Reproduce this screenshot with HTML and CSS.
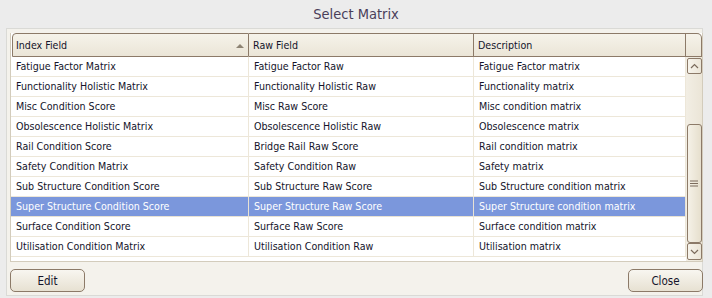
FILE: index.html
```html
<!DOCTYPE html>
<html>
<head>
<meta charset="utf-8">
<link rel="stylesheet" href="styles.css">
</head>
<body>
<div class="title">Select Matrix</div>
<div class="panel">
  <div class="table">
    <div class="hcell c1">Index Field<span class="sort"></span></div>
    <div class="hcell">Raw Field</div>
    <div class="hcell">Description</div>
    <div class="hcell corner"></div>

    <div class="scroll">
      <div class="sbtn up"><svg width="9" height="6" viewBox="0 0 9 6"><path d="M1 5 L4.5 1.5 L8 5" fill="none" stroke="#7b6b5c" stroke-width="1.2"/></svg></div>
      <div class="gap1"></div>
      <div class="thumb"><svg width="8" height="7" viewBox="0 0 8 7"><path d="M0 1h8M0 3.5h8M0 6h8" stroke="#7b6b5c" stroke-width="1"/></svg></div>
      <div class="gap2"></div>
      <div class="sbtn down"><svg width="9" height="6" viewBox="0 0 9 6"><path d="M1 1 L4.5 4.5 L8 1" fill="none" stroke="#7b6b5c" stroke-width="1.2"/></svg></div>
    </div>

    <div class="cell">Fatigue Factor Matrix</div><div class="cell">Fatigue Factor Raw</div><div class="cell">Fatigue Factor matrix</div>
    <div class="cell">Functionality Holistic Matrix</div><div class="cell">Functionality Holistic Raw</div><div class="cell">Functionality matrix</div>
    <div class="cell">Misc Condition Score</div><div class="cell">Misc Raw Score</div><div class="cell">Misc condition matrix</div>
    <div class="cell">Obsolescence Holistic Matrix</div><div class="cell">Obsolescence Holistic Raw</div><div class="cell">Obsolescence matrix</div>
    <div class="cell">Rail Condition Score</div><div class="cell">Bridge Rail Raw Score</div><div class="cell">Rail condition matrix</div>
    <div class="cell">Safety Condition Matrix</div><div class="cell">Safety Condition Raw</div><div class="cell">Safety matrix</div>
    <div class="cell">Sub Structure Condition Score</div><div class="cell">Sub Structure Raw Score</div><div class="cell">Sub Structure condition matrix</div>
    <div class="cell sel">Super Structure Condition Score</div><div class="cell sel">Super Structure Raw Score</div><div class="cell sel">Super Structure condition matrix</div>
    <div class="cell">Surface Condition Score</div><div class="cell">Surface Raw Score</div><div class="cell">Surface condition matrix</div>
    <div class="cell">Utilisation Condition Matrix</div><div class="cell">Utilisation Condition Raw</div><div class="cell">Utilisation matrix</div>
    <div class="filler"></div>
  </div>
  <div class="buttons">
    <button class="btn">Edit</button>
    <button class="btn">Close</button>
  </div>
</div>
</body>
</html>
```
FILE: styles.css
```css
html, body {
  margin: 0;
  padding: 0;
}
body {
  width: 712px;
  height: 298px;
  background: #ececec;
  font-family: "DejaVu Sans Condensed", "DejaVu Sans", sans-serif;
  font-size: 10.6px;
  color: #14142a;
  overflow: hidden;
}
.title {
  height: 28px;
  line-height: 28px;
  text-align: center;
  font-size: 14.5px;
  color: #4a3e5a;
}
.panel {
  margin-left: 6px;
  width: 697px;
  height: 268px;
  border: 1px solid #dadad6;
  background: #f4f2ec;
  padding: 4px 0 0 3px;
  box-sizing: border-box;
}
.table {
  width: 693px;
  box-sizing: border-box;
  border: 1px solid #d3ccbc;
  border-top: none;
  background: #fff;
  display: grid;
  grid-template-columns: 238px 225px 212px 16px;
  grid-template-rows: 24px repeat(10, 20px) 4px;
}
.hcell {
  background: linear-gradient(#f6f3ea, #ebe5d7);
  border-top: 1px solid #8c7a68;
  border-bottom: 1px solid #8c7a68;
  border-right: 1px solid #8c7a68;
  padding-left: 4px;
  display: flex;
  align-items: center;
  position: relative;
}
.hcell.c1 {
  border-left: 1px solid #8c7a68;
  border-top-left-radius: 4px;
  margin-left: 1px;
  padding-left: 3px;
}
.hcell.corner {
  border-top-right-radius: 5px;
  padding: 0;
}
.sort {
  position: absolute;
  right: 4px;
  top: 10px;
  width: 0;
  height: 0;
  border-left: 4px solid transparent;
  border-right: 4px solid transparent;
  border-bottom: 4px solid #8e8474;
}
.cell {
  border-bottom: 1px solid #ede7d9;
  border-right: 1px solid #ede7d9;
  padding-left: 5px;
  padding-bottom: 1px;
  display: flex;
  align-items: center;
  white-space: nowrap;
  overflow: hidden;
}
.cell.sel {
  background: #7b97dc;
  color: #fff;
  border-bottom-color: #e8e2d4;
  border-right-color: #e8e2d4;
}
.filler {
  grid-column: 1 / 4;
}
.scroll {
  grid-column: 4;
  grid-row: 2 / 13;
  background: linear-gradient(90deg, #f2eee4, #ebe5d7);
  display: flex;
  flex-direction: column;
  align-items: center;
}
.sbtn {
  width: 15px;
  height: 16px;
  box-sizing: border-box;
  border: 1px solid #8c7a68;
  border-radius: 2px;
  background: linear-gradient(90deg, #f7f4ec, #ebe5d7);
  display: flex;
  align-items: center;
  justify-content: center;
}
.sbtn.up {
  margin-top: 1px;
}
.sbtn.down {
  height: 17px;
  margin-bottom: 1px;
}
.gap1 {
  height: 50px;
}
.gap2 {
  flex: 1;
}
.thumb {
  width: 15px;
  height: 119px;
  box-sizing: border-box;
  border: 1px solid #8c7a68;
  border-radius: 3px;
  background: linear-gradient(90deg, #f5f1e7, #e6dfcd);
  display: flex;
  align-items: center;
  justify-content: center;
}
.buttons {
  display: flex;
  justify-content: space-between;
  margin-top: 7px;
  width: 693px;
}
.btn {
  width: 75px;
  height: 23px;
  border: 1px solid #8c7a68;
  border-radius: 5px;
  background: linear-gradient(#f8f6f0, #e7e1d2);
  font-family: inherit;
  font-size: 11.5px;
  color: #14142a;
  padding: 0;
}
```
